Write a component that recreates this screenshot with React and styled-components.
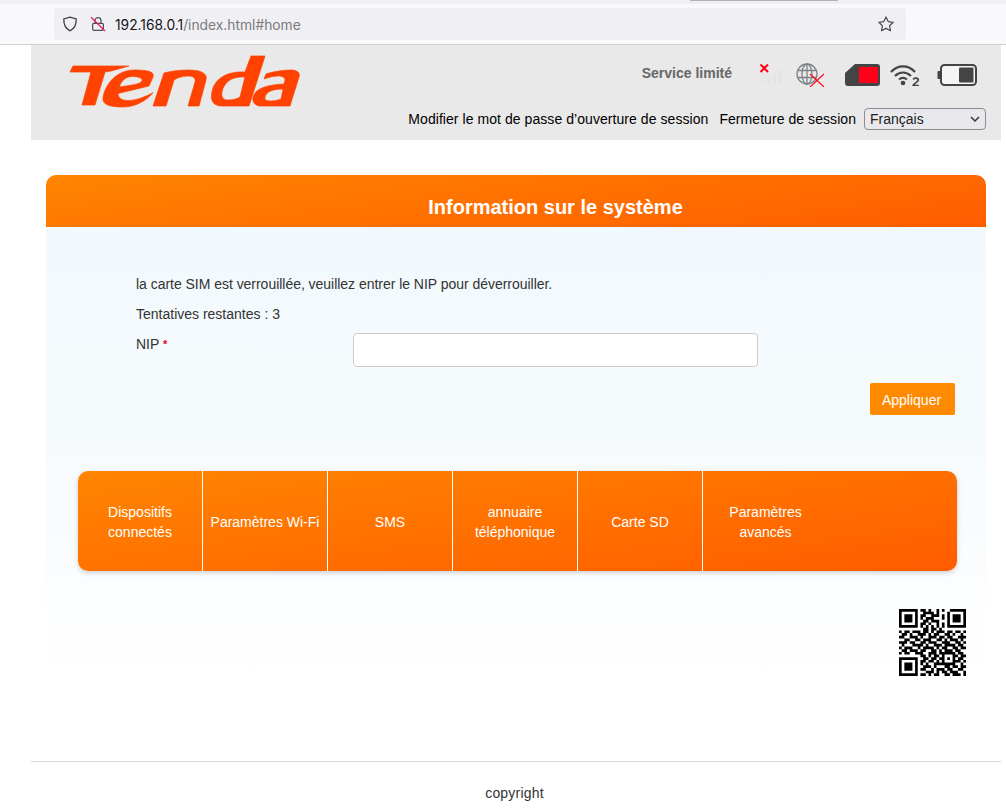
import React from "react";
import styled, { createGlobalStyle } from "styled-components";

const Global = createGlobalStyle`
  html, body { margin: 0; padding: 0; background: #fff; }
  body { font-family: "Liberation Sans", Arial, sans-serif; color: #333; }
  * { box-sizing: border-box; }
`;

const orange = "linear-gradient(172deg, #ff8500 0%, #ff5c00 100%)";

const Chrome = styled.div`
  position: relative;
  height: 45px;
  background: #f9f9fb;
  border-top: 4px solid #f0f0f4;
  border-bottom: 1px solid #cfcfd2;
  padding: 4px 100px 0 54px;
`;
const TabShadow = styled.div`
  position: absolute;
  top: -4px;
  left: 690px;
  width: 148px;
  height: 1px;
  background: #b4b4b8;
`;
const UrlBar = styled.div`
  height: 32px;
  border-radius: 4px;
  background: #f0f0f4;
  display: flex;
  align-items: center;
  padding: 0 12px 0 8px;
  color: #15141a;
`;
const ChromeIcon = styled.svg`
  width: 16px;
  height: 16px;
  flex: none;
  margin-right: ${(p) => p.$mr || 0}px;
`;
const Url = styled.span`
  flex: 1;
  font-family: Inter, "Liberation Sans", sans-serif;
  font-size: 13.8px;
  margin-top: 2px;
  span { color: #7a7a80; }
`;
const Page = styled.div`
  width: 970px;
  margin-left: 31px;
`;
const Header = styled.header`
  height: 95px;
  background: #e9e9e9;
  display: flex;
  justify-content: space-between;
  padding: 9px 15px 0 38px;
`;
const Logo = styled.svg`
  width: 234px;
  height: 56px;
  flex: none;
`;
const HeaderRight = styled.div`
  display: flex;
  flex-direction: column;
  align-items: flex-end;
`;
const StatusRow = styled.div`
  height: 42px;
  display: flex;
  align-items: center;
  padding-right: 9px;
  margin-bottom: 12px;
`;
const StatusText = styled.span`
  font-size: 14px;
  font-weight: 700;
  color: #666;
  margin-right: 27px;
  margin-top: -5px;
`;
const StatusIcon = styled.svg`
  flex: none;
  display: block;
  margin-right: ${(p) => p.$mr || 0}px;
`;
const LinkRow = styled.div`
  display: flex;
  align-items: center;
  height: 22px;
`;
const HeaderLink = styled.a`
  font-size: 14px;
  letter-spacing: 0.06px;
  color: #000;
  margin-right: ${(p) => p.$mr}px;
`;
const SelectWrap = styled.div`
  position: relative;
  width: 122px;
  height: 22px;
  border: 1px solid #8b8b92;
  border-radius: 4px;
  background: #e9e9ed;
  font-size: 14px;
  color: #222;
  display: flex;
  align-items: center;
  padding-left: 5px;
`;
const Chevron = styled.svg`
  position: absolute;
  right: 5px;
  top: 6px;
  width: 10px;
  height: 8px;
`;
const Panel = styled.main`
  width: 940px;
  margin: 35px 0 0 15px;
`;
const Title = styled.h1`
  margin: 0;
  height: 52px;
  border-radius: 10px 10px 0 0;
  background: ${orange};
  color: #fff;
  font-size: 20px;
  font-weight: 700;
  line-height: 64px;
  text-align: center;
  padding-left: 79px;
`;
const PanelBody = styled.div`
  height: 463px;
  background: linear-gradient(180deg, #f2f9fc 0%, #f5fafd 45%, #fdfeff 85%, #fff 100%);
  padding: 47px 32px 0;
  position: relative;
`;
const Form = styled.div`
  padding-left: 58px;
  font-size: 14px;
  color: #333;
`;
const Line = styled.div`
  height: 30px;
  line-height: 20px;
  letter-spacing: ${(p) => (p.$tight ? "-0.03px" : "0")};
`;
const FieldRow = styled.div`
  display: flex;
`;
const FieldLabel = styled.label`
  width: 217px;
  line-height: 20px;
  b { color: #e60012; font-weight: 700; font-size: 11px; vertical-align: 1px; }
`;
const Input = styled.div`
  width: 405px;
  height: 34px;
  margin-top: -1px;
  background: #fff;
  border: 1px solid #ccc;
  border-radius: 4px;
`;
const Actions = styled.div`
  display: flex;
  justify-content: flex-end;
  margin: 16px -1px 56px 0;
`;
const Button = styled.button`
  width: 85px;
  height: 32px;
  border: 0;
  border-radius: 2px;
  background: #ff8a00;
  color: #fff;
  font: 14px "Liberation Sans", Arial, sans-serif;
  padding: 2px 2px 0 0;
`;
const Menu = styled.nav`
  width: 879px;
  height: 100px;
  border-radius: 10px;
  background: ${orange};
  box-shadow: 0 2px 5px rgba(0, 0, 0, 0.18);
  display: flex;
`;
const MenuItem = styled.a`
  width: 125px;
  height: 100%;
  border-right: ${(p) => (p.$last ? "0" : "1px solid #fff")};
  color: #fff;
  font-size: 14px;
  line-height: 20px;
  text-align: center;
  display: flex;
  align-items: center;
  justify-content: center;
  padding: 2px ${(p) => p.$pad ?? 0}px 0;
`;
const Qr = styled.svg`
  position: absolute;
  left: 853px;
  top: 382px;
  width: 67px;
  height: 67px;
`;
const Footer = styled.footer`
  margin-top: 71px;
  border-top: 1px solid #d9d9d9;
  height: 50px;
  font-size: 14px;
  letter-spacing: 0.2px;
  color: #333;
  text-align: center;
  padding: 22px 3px 0 0;
  line-height: 18px;
`;

const QR_ROWS = [
  "1111111011010010100111111",
  "1000001001111010001000001",
  "1011101011001110101011101",
  "1011101010111000101011101",
  "1011101001101110001011101",
  "1000001011010010101000001",
  "1111111010101010101111111",
  "0000000001101101000000000",
  "1011011101101011101101101",
  "0110100111010110011010010",
  "1100111010011101101100111",
  "0011001101110011010111010",
  "1110110011011100111001101",
  "0100011110100111011110110",
  "1011100101111010110011011",
  "0110111011001101011101100",
  "1011001110011101111110110",
  "0000000011010110100011011",
  "1111111001101101101010110",
  "1000001011011010100011101",
  "1011101010100111111110010",
  "1011101001110100011011011",
  "1011101011001011101100110",
  "1000001000111010110111001",
  "1111111011010110011011101",
];

const qrPath = QR_ROWS.map((row, y) =>
  row
    .split("")
    .map((c, x) => (c === "1" ? `M${x} ${y}h1v1h-1z` : ""))
    .join("")
).join("");

const MENU = [
  ["Dispositifs connectés", 28],
  ["Paramètres Wi-Fi", 0],
  ["SMS", 0],
  ["annuaire téléphonique", 16],
  ["Carte SD", 0],
  ["Paramètres avancés", 22],
];

export default function App() {
  return (
    <>
      <Global />
      <Chrome>
        <TabShadow />
        <UrlBar>
          <ChromeIcon viewBox="0 0 16 16" $mr={12} fill="none" stroke="#3d3d42" strokeWidth="1.3">
            <path d="M8 1.2 14.2 3c.2 5.6-1.6 9.6-6.2 11.8C3.4 12.6 1.6 8.6 1.8 3z" />
          </ChromeIcon>
          <ChromeIcon viewBox="0 0 16 16" $mr={9} fill="none" stroke="#4d4d52" strokeWidth="1.2">
            <rect x="2.6" y="7.4" width="10.8" height="7" rx="1.4" />
            <path d="M5 7.2V4.6a3 3 0 0 1 6 0v2.6" />
            <path d="M1 1.2 15 15" stroke="#e3225c" strokeWidth="1.3" />
          </ChromeIcon>
          <Url>192.168.0.1<span>/index.html#home</span></Url>
          <ChromeIcon viewBox="0 0 16 16" fill="none" stroke="#4a4a4f" strokeWidth="1.2">
            <path d="m8 1 2.2 4.6 5 .7-3.6 3.5.9 5L8 12.4l-4.5 2.4.9-5L.8 6.3l5-.7z" strokeLinejoin="round" />
          </ChromeIcon>
        </UrlBar>
      </Chrome>
      <Page>
        <Header>
          <Logo viewBox="69 54 234 56" aria-label="Tenda">
            <g fill="#ff4200" fillRule="evenodd" stroke="#ff4200" strokeWidth="0.7">
              <path d="M73 66H129L111 71 105 72 95 105H82L91 72H70Z" />
              <path d="M103 98C105 84 117 70 134 70C146 70 155 71 153 77L149 86 118 93.500C118 98 122 100.500 128 100.500C136 100.500 145 97 153 92.700C146 101 135 107 123 107C111 107 102 105 103 98ZM119.300 87 134.300 84.700C139 83.500 143 82 142 79.500C141 77 135 76.500 132 76.500C126 76.500 121 81 119.300 87Z" />
              <path d="M153 106 164 73C171 71 180 70 188 70C200 70 208 73 206 80L199 106H188L195 82C196 78 193 76 188 76C182 76 177 78 174 80L166 106Z" />
              <path d="M251 56H265L249 106H222C213 106 210 100 212 92C214 80 225 71 245 72ZM245 77C232 76 224 82 222 92C221 98 224 100 228 100C233 100 237 99 240 97Z" />
              <path d="M266 74C275 71 285 70 291 70C299 70 300 74 299 77L290 106H261C255 106 252 102 253 97C255 90 263 85 284 84L285 80C285 77 282 76 278 76C274 76 270 77 264 79ZM283 89C272 89 266 92 265 97C264 100 267 101 270 101C274 101 279 100 281 99Z" />
            </g>
          </Logo>
          <HeaderRight>
            <StatusRow>
              <StatusText>Service limité</StatusText>
              <StatusIcon width="24" height="24" viewBox="0 0 24 24" $mr={13}>
                <path d="M3 21h3v-3H3zM8.500 21h3v-8h-3zM14 21h3V11h-3zM19.500 21h3V7h-3z" fill="#e4e4e4" />
                <path d="M1.500 1.500 9 9M9 1.500 1.500 9" stroke="#ff0018" strokeWidth="2" fill="none" />
              </StatusIcon>
              <StatusIcon width="29" height="24" viewBox="0 0 29 24" fill="none" $mr={20}>
                <g stroke="#7c8388" strokeWidth="1.300">
                  <circle cx="11" cy="11" r="10" />
                  <ellipse cx="11" cy="11" rx="5" ry="10" />
                  <path d="M11 1v20M1.500 7.500h19M1.500 14.500h19" />
                </g>
                <path d="M14 11 28 24M28 11 14 24" stroke="#ff0018" strokeWidth="1.100" />
              </StatusIcon>
              <StatusIcon width="35" height="22" viewBox="0 0 35 22" $mr={10}>
                <path d="M10 0h22a3 3 0 0 1 3 3v16a3 3 0 0 1-3 3H3a3 3 0 0 1-3-3V9z" fill="#444" />
                <rect x="14" y="3" width="19" height="16" fill="#ff0018" />
              </StatusIcon>
              <StatusIcon width="32" height="22" viewBox="0 0 32 22" fill="none" $mr={15}>
                <g stroke="#444" strokeWidth="2.200">
                  <path d="M1 8c7-7.500 17-7.500 24 0" />
                  <path d="M5 12c4.800-4.500 11-4.500 16 0" />
                  <path d="M9 15.500c2.500-2 5.500-2 8 0" />
                </g>
                <circle cx="13" cy="19" r="2.300" fill="#444" />
                <path d="M23.300 15.500c.5-2 5-2 5 .4 0 2-4.200 3.200-5.200 5.600h5.800" stroke="#444" strokeWidth="1.700" />
              </StatusIcon>
              <StatusIcon width="40" height="22" viewBox="0 0 40 22" fill="none">
                <path d="M4 7H1.500C.8 7 .5 7.500.5 8v6c0 .5.300 1 1 1H4z" fill="#444" />
                <rect x="4" y="1" width="35" height="20" rx="3.500" fill="#f4f4f4" stroke="#444" strokeWidth="2" />
                <rect x="22" y="3.500" width="14.500" height="15" rx="1" fill="#444" />
              </StatusIcon>
            </StatusRow>
            <LinkRow>
              <HeaderLink $mr={11}>Modifier le mot de passe d’ouverture de session</HeaderLink>
              <HeaderLink $mr={8}>Fermeture de session</HeaderLink>
              <SelectWrap>
                Français
                <Chevron viewBox="0 0 10 8" fill="none" stroke="#333" strokeWidth="1.500">
                  <path d="m1 2 4 4 4-4" />
                </Chevron>
              </SelectWrap>
            </LinkRow>
          </HeaderRight>
        </Header>
        <Panel>
          <Title>Information sur le système</Title>
          <PanelBody>
            <Form>
              <Line $tight>la carte SIM est verrouillée, veuillez entrer le NIP pour déverrouiller.</Line>
              <Line>Tentatives restantes : 3</Line>
              <FieldRow>
                <FieldLabel>NIP <b>*</b></FieldLabel>
                <Input />
              </FieldRow>
              <Actions><Button>Appliquer</Button></Actions>
            </Form>
            <Menu>
              {MENU.map(([label, pad], i) => (
                <MenuItem key={label} $pad={pad} $last={i === MENU.length - 1}>{label}</MenuItem>
              ))}
            </Menu>
            <Qr viewBox="0 0 25 25"><path d={qrPath} fill="#000" /></Qr>
          </PanelBody>
        </Panel>
        <Footer>copyright</Footer>
      </Page>
    </>
  );
}
